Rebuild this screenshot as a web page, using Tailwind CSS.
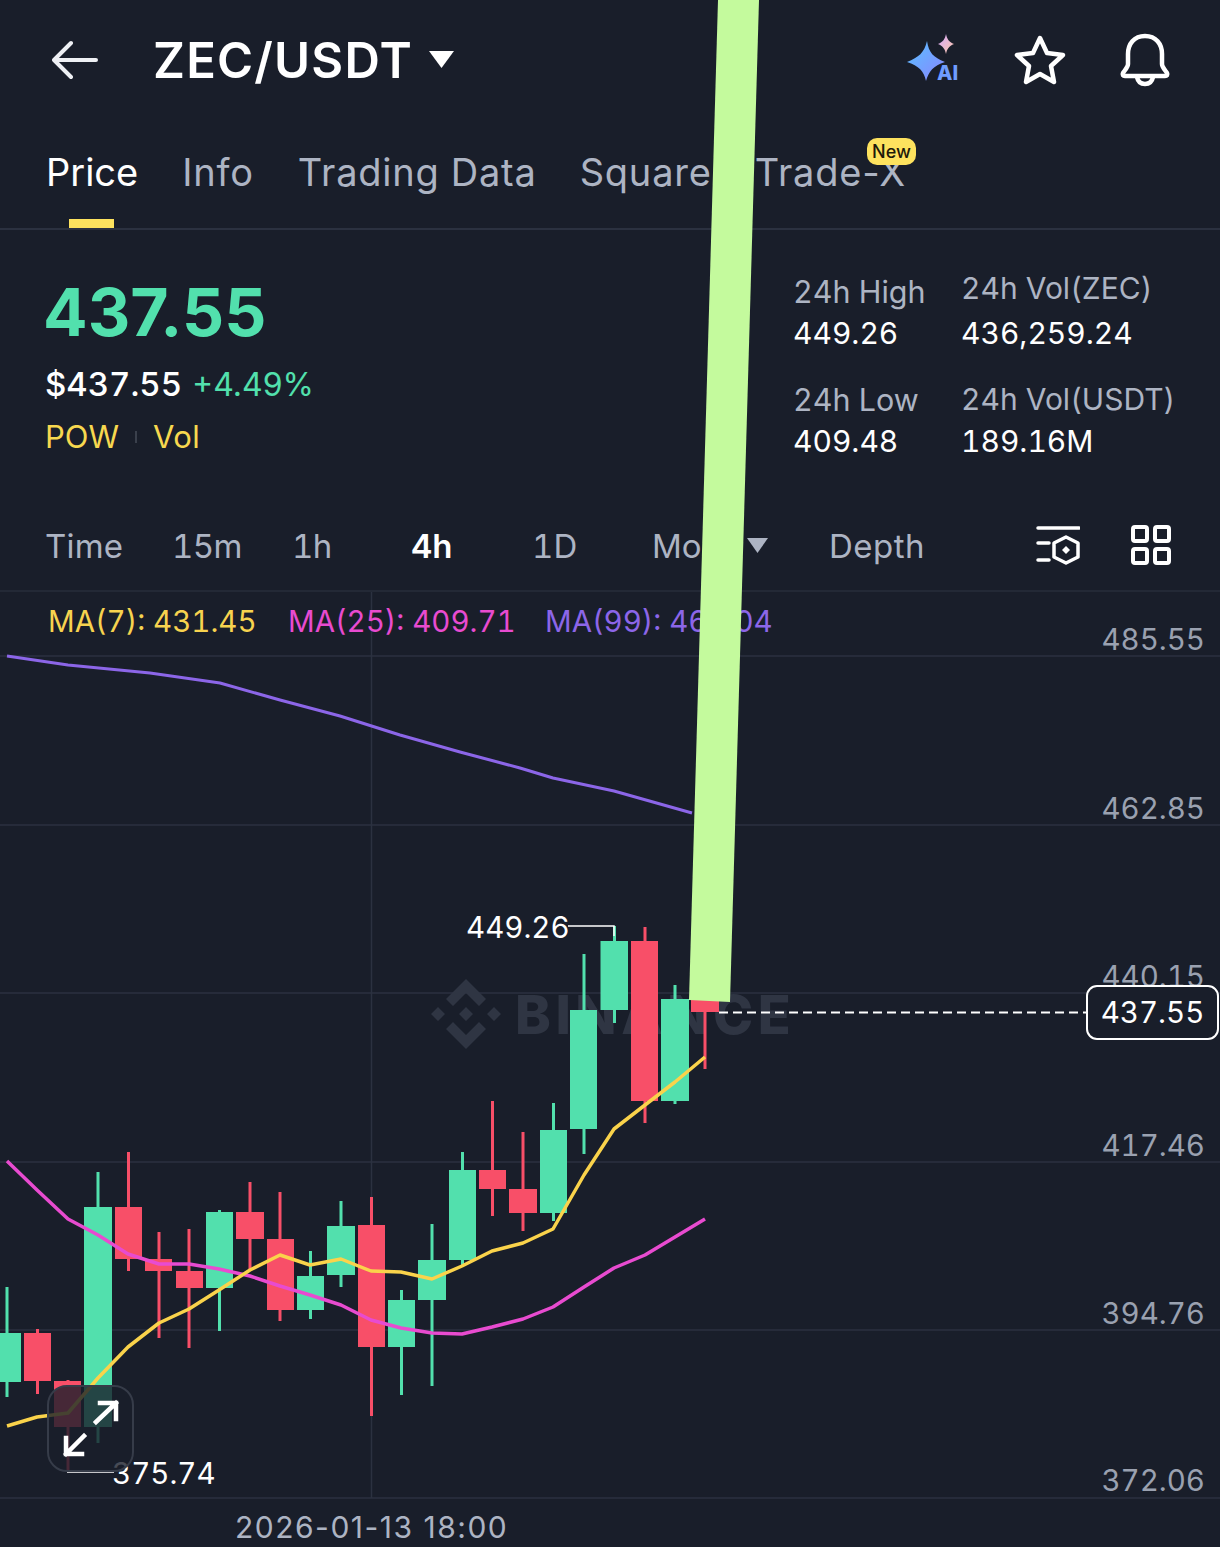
<!DOCTYPE html>
<html>
<head>
<meta charset="utf-8">
<script src="https://cdn.jsdelivr.net/npm/@tailwindcss/browser@4"></script>
</head>
<body class="bg-[#191e2a]">
<div class="relative w-[1220px] h-[1547px] overflow-hidden bg-[#191e2a] font-['Inter',sans-serif] tabular-nums text-[#adb4c3]">

  <header class="flex items-center h-[120px] pl-[52px] pr-[49px]">
    <svg width="46" height="40" viewBox="0 0 46 40" fill="none" stroke="#eef0f4" stroke-width="4" stroke-linecap="round" stroke-linejoin="round"><path d="M44 20H3M19 3L2 20l17 17"/></svg>
    <span class="ml-[55px] text-[49px] leading-none font-semibold text-white tracking-[1.2px]">ZEC/USDT</span>
    <svg class="ml-[15px] mt-[-1px]" width="27" height="19" viewBox="0 0 27 19"><path d="M1 1h25L13.5 18z" fill="#fff"/></svg>
    <div class="ml-auto flex items-center">
      <svg width="56" height="52" viewBox="0 0 56 52" class="mr-[52px]">
        <defs>
          <linearGradient id="ai1" x1="0" y1="0" x2="1" y2="1"><stop offset="0" stop-color="#58c2ff"/><stop offset="1" stop-color="#8b84ff"/></linearGradient>
          <linearGradient id="ai2" x1="0" y1="0" x2="1" y2="1"><stop offset="0" stop-color="#d3a8ff"/><stop offset="1" stop-color="#ffc9a8"/></linearGradient>
        </defs>
        <path d="M21 7C23 19 27 23 39 28 27 32 23 37 20 47 18 37 13 32 1 28 13 23 18 19 21 7z" fill="url(#ai1)"/>
        <path d="M40 0C41 5 43 8 48 10 43 12 41 15 40 20 39 15 37 12 32 10 37 8 39 5 40 0z" fill="url(#ai2)"/>
        <text x="31" y="46" font-size="20" font-weight="800" fill="#6f9dff" font-family="Inter">AI</text>
      </svg>
      <svg width="52" height="50" viewBox="0 0 52 50" fill="none" stroke="#fff" stroke-width="4.500" stroke-linejoin="round" class="mr-[53px]"><path d="M26 3l7 15 16 2-12 11 3 16-14-8-14 8 3-16L3 20l16-2z"/></svg>
      <svg width="52" height="54" viewBox="0 0 52 54" fill="none" stroke="#fff" stroke-width="4.500" stroke-linejoin="round"><path d="M26 3C15 3 9 11 9 21v10c0 3-3 6-5 9-1 2 0 3 2 3h40c2 0 3-1 2-3-2-3-5-6-5-9V21C43 11 37 3 26 3z"/><path d="M18 44c1 5 4 7 8 7s7-2 8-7"/></svg>
    </div>
  </header>

  <nav class="relative flex items-center h-[110px] pl-[46px] text-[38px] leading-none border-b-2 border-[#2b3140] pb-[2px]">
    <span class="relative text-white mt-[-2px]">Price<span class="absolute left-[23px] top-[66px] w-[45px] h-[9px] bg-[#fde25e]"></span></span>
    <span class="ml-[44px] mt-[-2px] tracking-[0.8px]">Info</span>
    <span class="ml-[44px] mt-[-2px] tracking-[0.8px]">Trading Data</span>
    <span class="ml-[43px] mt-[-2px] tracking-[0.8px]">Square</span>
    <span class="ml-[43px] mt-[-2px] tracking-[0.8px] [font-variant-numeric:normal]">Trade-X</span>
    <span class="absolute left-[867px] top-[18px] w-[49px] h-[27px] rounded-[10px] bg-[#fde25e] text-[#1e1a0a] text-[18px] font-medium flex items-center justify-center">New</span>
  </nav>

  <section class="flex h-[283px] pl-[46px]">
    <div class="w-[747px]">
      <div class="mt-[44px] ml-[-3px] text-[66px] leading-[76px] font-bold text-[#52e0ad] [font-variant-numeric:normal]">437.55</div>
      <div class="mt-[14px] ml-[-1px] flex items-baseline leading-[40px]">
        <span class="text-white text-[33px] font-medium">$437.55</span>
        <span class="ml-[10px] text-[#52e0ad] text-[32px] [font-variant-numeric:normal]">+4.49%</span>
      </div>
      <div class="mt-[12px] ml-[-1px] flex items-center text-[31px] leading-[40px] text-[#f7d84f]">
        <span>POW</span><span class="mx-[16px] w-[2px] h-[12px] bg-[#3a404c]"></span><span class="tracking-[0.4px]">Vol</span>
      </div>
    </div>
    <div class="w-[168px] text-[30px] leading-[40px] pt-[42px]">
      <div class="text-[30.500px]">24h High</div>
      <div class="mt-[1px] text-white">449.26</div>
      <div class="mt-[27px] text-[30.500px]">24h Low</div>
      <div class="mt-[1px] text-white">409.48</div>
    </div>
    <div class="text-[30px] leading-[40px] pt-[38px]">
      <div>24h Vol(ZEC)</div>
      <div class="mt-[5px] text-white">436,259.24</div>
      <div class="mt-[26px]">24h Vol(USDT)</div>
      <div class="mt-[2px] text-white">189.16M</div>
    </div>
  </section>

  <div class="relative flex items-center h-[79px] pb-[10px] text-[33px] leading-none border-b-2 border-[#232936]">
    <span class="absolute left-[45px] tracking-[0.2px]">Time</span>
    <span class="absolute left-[172px] tracking-[-0.6px]">15m</span>
    <span class="absolute left-[292px] tracking-[-0.6px]">1h</span>
    <span class="absolute left-[411px] text-white font-semibold">4h</span>
    <span class="absolute left-[532px]">1D</span>
    <span class="absolute left-[652px]">More</span>
    <svg class="absolute left-[747px] top-[25px]" width="21" height="15" viewBox="0 0 21 15"><path d="M0 0h21L10.500 15z" fill="#adb4c3"/></svg>
    <span class="absolute left-[829px] tracking-[0.5px]">Depth</span>
    <svg class="absolute left-[1036px] top-[12px]" width="44" height="44" viewBox="0 0 44 44" fill="none" stroke="#fff" stroke-width="3.500" stroke-linecap="round" stroke-linejoin="round"><path d="M2 3h41M2 18h11M2 35h11"/><path d="M30 12l12 6v14l-12 6-12-6V18z"/><path d="M30 21l4 4-4 4-4-4z" fill="#fff" stroke="none"/></svg>
    <svg class="absolute left-[1130px] top-[11px]" width="42" height="42" viewBox="0 0 42 42" fill="none" stroke="#fff" stroke-width="4"><rect x="3" y="3" width="14" height="14" rx="2"/><rect x="25" y="3" width="14" height="14" rx="2"/><rect x="3" y="25" width="14" height="14" rx="2"/><rect x="25" y="25" width="14" height="14" rx="2"/></svg>
  </div>

  <div class="relative h-[955px]">
    <svg class="absolute left-0 top-[-592px]" width="1220" height="1547" viewBox="0 0 1220 1547" fill="none">
      <g stroke="#2b3140" stroke-width="1.500">
        <path d="M0 656H1220M0 825H1220M0 993H1220M0 1162H1220M0 1330H1220M0 1498H1220M371.500 592V1498"/>
      </g>
      <g fill="#2f3543">
        <path d="M466 979l20 20-7 7-13-13-13 13-7-7zM438 1007l7 7-7 7-7-7zM494 1007l7 7-7 7-7-7zM466 1007l7 7-7 7-7-7zM453 1022l13 13 13-13 7 7-20 20-20-20z"/>
        <text x="515" y="1034" font-family="Inter" font-size="54" font-weight="800" letter-spacing="4.500">BINANCE</text>
      </g>
      <g id="wicks" stroke-width="3">
        <g stroke="#52e0ad"><path d="M7 1287V1397M98 1172V1443M219.500 1210V1331M310.500 1251V1319M341 1201V1287M401.500 1290V1395M432 1224V1386M462.500 1152V1265M553.500 1103V1221M584 954V1154M614.500 926V1023M675 985V1104"/></g>
        <g stroke="#f84f68"><path d="M37.500 1329V1394M68 1380V1472M128.500 1152V1271M159 1232V1338M189 1229V1348M250 1182V1270M280 1192V1321M371.500 1197V1416M492.500 1101V1216M523 1132V1231M645 927V1123M705 1000V1069"/></g>
      </g>
      <g fill="#52e0ad">
        <rect x="-6" y="1333" width="27" height="49"/><rect x="84" y="1207" width="28" height="220"/><rect x="206" y="1212" width="27" height="76"/><rect x="297" y="1276" width="27" height="34"/><rect x="327" y="1226" width="28" height="49"/><rect x="388" y="1300" width="27" height="47"/><rect x="418" y="1260" width="28" height="40"/><rect x="449" y="1170" width="27" height="90"/><rect x="540" y="1130" width="27" height="83"/><rect x="570" y="1010" width="27" height="119"/><rect x="600.500" y="941" width="27.500" height="69"/><rect x="661" y="999" width="28" height="102"/>
      </g>
      <g fill="#f84f68">
        <rect x="24" y="1333" width="27" height="48"/><rect x="54" y="1381" width="27" height="46"/><rect x="115" y="1207" width="27" height="52"/><rect x="145" y="1259" width="27" height="12"/><rect x="176" y="1271" width="27" height="17"/><rect x="236" y="1212" width="28" height="27"/><rect x="267" y="1239" width="27" height="71"/><rect x="358" y="1225" width="27" height="122"/><rect x="479" y="1170" width="27" height="19"/><rect x="509" y="1189" width="28" height="24"/><rect x="631" y="941" width="27" height="160"/><rect x="691" y="1000" width="28" height="12"/>
      </g>
      <path d="M7 656L68 665 150 673 220 683 280 700 340 716 400 735 460 752 520 768 553 778 614 791 692 813" stroke="#8c66e8" stroke-width="3" stroke-linejoin="round"/>
      <path d="M7 1161L37 1190 68 1219 98 1235 128 1254 159 1264 189 1264 219 1269 250 1276 280 1286 310 1295 341 1305 371 1320 401 1328 432 1333 462 1334 492 1327 523 1319 553 1307 584 1287 614 1268 645 1255 675 1237 705 1219" stroke="#e84bd0" stroke-width="3.500" stroke-linejoin="round"/>
      <path d="M7 1426L37 1417 68 1413 98 1378 128 1347 159 1323 189 1309 219 1290 250 1270 280 1255 310 1265 341 1259 371 1271 401 1272 432 1279 462 1266 492 1251 523 1243 553 1229 584 1175 614 1129 645 1105 675 1082 705 1057" stroke="#fad34b" stroke-width="3.500" stroke-linejoin="round"/>
      <path d="M568 926H614V936" stroke="#fff" stroke-width="1.500"/>
      <path d="M67 1472H114" stroke="#fff" stroke-width="1.500"/>
      <path d="M719 1012.500H1087" stroke="#fff" stroke-width="2" stroke-dasharray="9 5"/>
    </svg>

    <div class="absolute left-[48px] top-[11px] text-[29.500px] leading-[36px] text-[#f7d34f]">MA(7): 431.45</div>
    <div class="absolute left-[288px] top-[11px] text-[29.500px] leading-[36px] text-[#e84bd0]">MA(25): 409.71</div>
    <div class="absolute left-[545px] top-[11px] text-[29.500px] leading-[36px] text-[#8c66e8]">MA(99): 464.04</div>

    <div class="absolute right-[15px] top-[29px] text-[29.500px] leading-[36px] text-[#9aa1b0]">485.55</div>
    <div class="absolute right-[15px] top-[198px] text-[29.500px] leading-[36px] text-[#9aa1b0]">462.85</div>
    <div class="absolute right-[15px] top-[366px] text-[29.500px] leading-[36px] text-[#9aa1b0]">440.15</div>
    <div class="absolute right-[15px] top-[535px] text-[29.500px] leading-[36px] text-[#9aa1b0]">417.46</div>
    <div class="absolute right-[15px] top-[703px] text-[29.500px] leading-[36px] text-[#9aa1b0]">394.76</div>
    <div class="absolute right-[15px] top-[870px] text-[29.500px] leading-[36px] text-[#9aa1b0]">372.06</div>

    <div class="absolute left-[1086px] top-[393px] w-[133px] h-[55px] rounded-[11px] border-2 border-white bg-[#191e2a] text-white text-[29.500px] flex items-center justify-center">437.55</div>

    <div class="absolute left-[466px] top-[317px] text-[29.500px] leading-[36px] text-white">449.26</div>
    <div class="absolute left-[112px] top-[863px] text-[29.500px] leading-[36px] text-white">375.74</div>
    <div class="absolute left-[235px] top-[917px] text-[30px] leading-[36px] text-[#adb4c3] tracking-[1.5px] [font-variant-numeric:normal]">2026-01-13 18:00</div>

    <div class="absolute left-[47px] top-[793px] w-[87px] h-[87px] rounded-[20px] border-2 border-[#363c49] bg-[#191e2a]/80 flex items-center justify-center">
      <svg width="62" height="62" viewBox="0 0 62 62" fill="none" stroke="#fff" stroke-width="4.500" stroke-linecap="square" stroke-linejoin="miter"><path d="M36 24L56 5M40 5H56V21"/><path d="M24 38L6 56M6 40V56H22"/></svg>
    </div>
  </div>

  <svg class="absolute left-0 top-0 pointer-events-none" width="1220" height="1547" viewBox="0 0 1220 1547"><polygon points="718,0 759,0 730,1002 689,1000" fill="#c4fa9d"/></svg>
</div>
</body>
</html>
